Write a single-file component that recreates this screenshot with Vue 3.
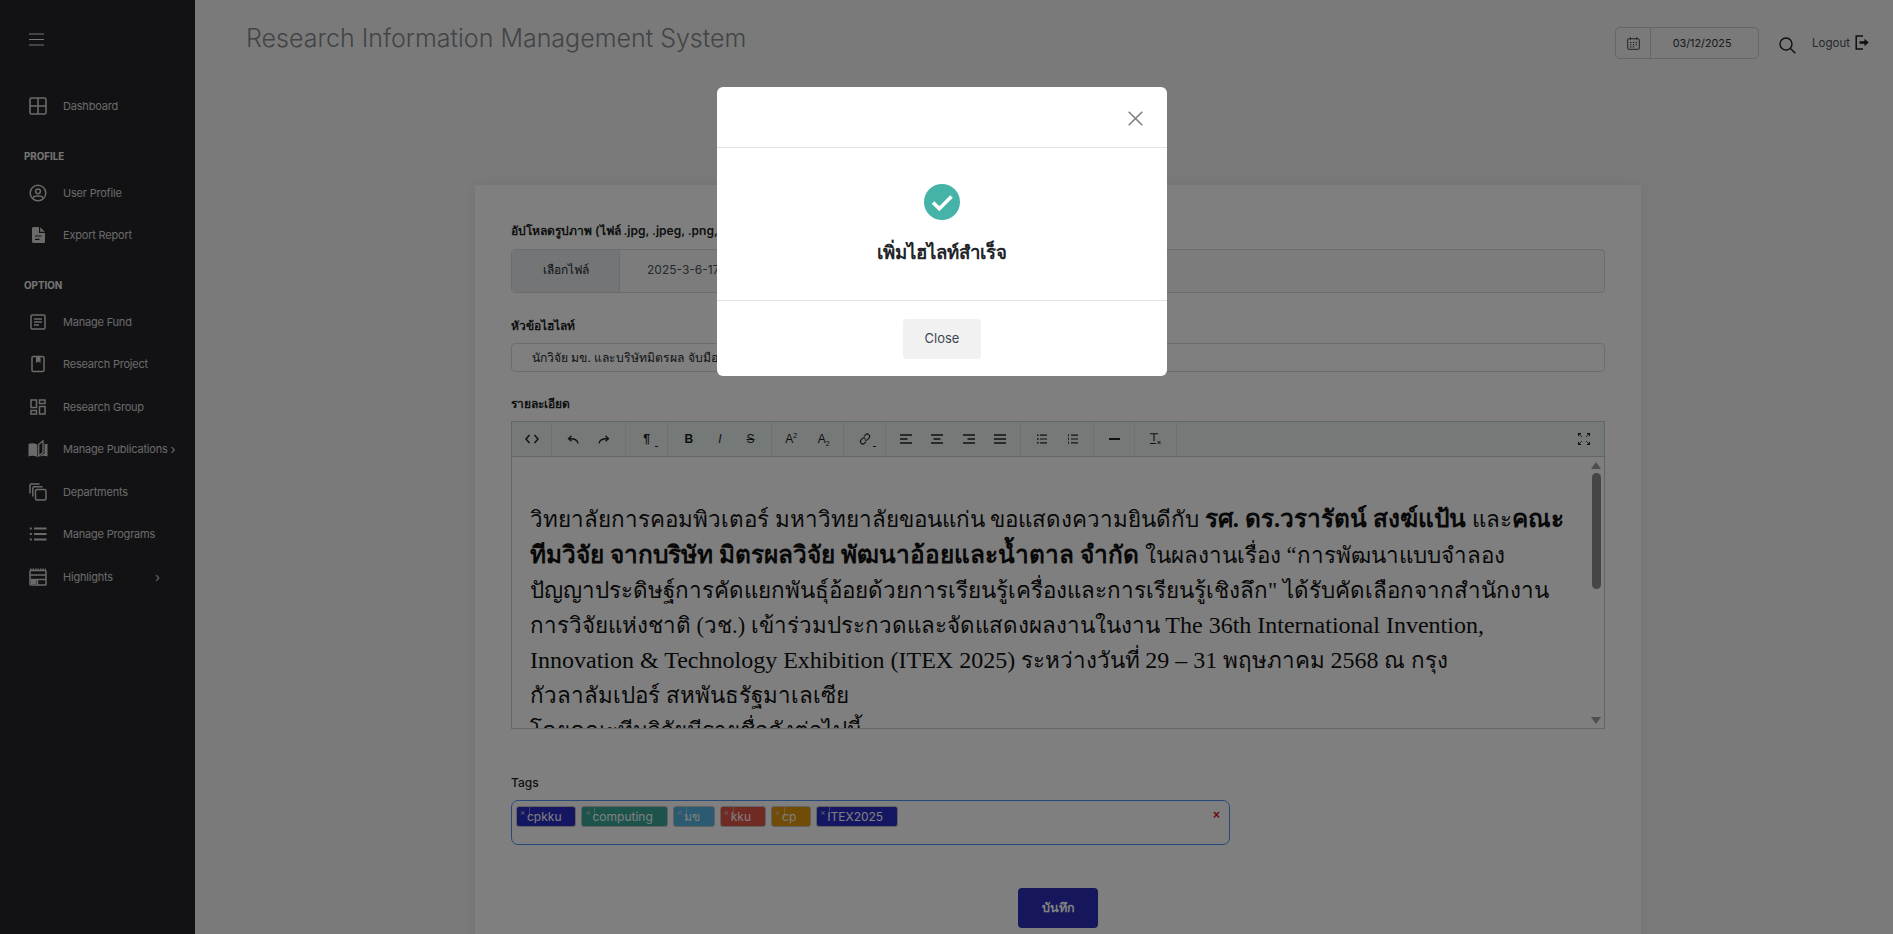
<template>
  <div class="page">
    <aside class="sidebar">
      <button class="burger">
        <svg width="15" height="13" viewBox="0 0 15 13"><path d="M0 1h15M0 6.5h15M0 12h15" stroke="currentColor" stroke-width="1.2" /></svg>
      </button>

      <a class="nav-item first">
        <span class="nav-icon"><svg viewBox="0 0 18 18"><rect x="1" y="1" width="16" height="16" rx="1.5" fill="none" stroke="currentColor" stroke-width="1.6" /><path d="M9 1v16M1 9h16" stroke="currentColor" stroke-width="1.6" /></svg></span>
        Dashboard
      </a>

      <div class="nav-head">PROFILE</div>
      <a class="nav-item">
        <span class="nav-icon"><svg viewBox="0 0 18 18"><circle cx="9" cy="9" r="7.8" fill="none" stroke="currentColor" stroke-width="1.5" /><circle cx="9" cy="7.3" r="2.4" fill="none" stroke="currentColor" stroke-width="1.5" /><path d="M4 14c1-2.6 9-2.6 10 0" fill="none" stroke="currentColor" stroke-width="1.5" /></svg></span>
        User Profile
      </a>
      <a class="nav-item">
        <span class="nav-icon"><svg viewBox="0 0 18 18"><path d="M3 2.5C3 1.6 3.6 1 4.5 1H11l5 5v10c0 .6-.6 1-1.2 1H4.5C3.6 17 3 16.4 3 15.5z" fill="currentColor" /><path d="M10.6 1v5.4H16M6 10h6.5M6 13.3h4.5" fill="none" stroke="#242429" stroke-width="1.2" /></svg></span>
        Export Report
      </a>

      <div class="nav-head">OPTION</div>
      <a class="nav-item">
        <span class="nav-icon"><svg viewBox="0 0 18 18"><rect x="2" y="2" width="14" height="14" rx="1.2" fill="none" stroke="currentColor" stroke-width="1.5" /><path d="M5 6h8M5 9h8M5 12h5" stroke="currentColor" stroke-width="1.4" /></svg></span>
        Manage Fund
      </a>
      <a class="nav-item">
        <span class="nav-icon"><svg viewBox="0 0 18 18"><rect x="3" y="1.5" width="12" height="15" rx="1.2" fill="none" stroke="currentColor" stroke-width="1.5" /><path d="M7 2h4.5v6L9.2 6.5 7 8z" fill="currentColor" /></svg></span>
        Research Project
      </a>
      <a class="nav-item">
        <span class="nav-icon"><svg viewBox="0 0 18 18" fill="none" stroke="currentColor" stroke-width="1.5"><rect x="2" y="2" width="5.5" height="7.5" /><rect x="10.5" y="2" width="5.5" height="3.5" /><rect x="2" y="12.5" width="5.5" height="3.5" /><rect x="10.5" y="8.5" width="5.5" height="7.5" /></svg></span>
        Research Group
      </a>
      <a class="nav-item">
        <span class="nav-icon"><svg class="wide" viewBox="0 0 20 18"><path d="M.5 4C3 3 6 3 9.3 4.5V17C6 15.5 3 15.5.5 16.5z" fill="currentColor" /><path d="M10.7 4.5 15 .8v11.7L10.7 16z" fill="none" stroke="currentColor" stroke-width="1.3" /><path d="M16.5 4h3v12.5c-3-1-6-1-8.5.5 2-2 4-3 5.5-3.5z" fill="currentColor" /></svg></span>
        Manage Publications
        <span class="chev near">›</span>
      </a>
      <a class="nav-item">
        <span class="nav-icon"><svg viewBox="0 0 18 18" fill="none" stroke="currentColor" stroke-width="1.5"><rect x="6.5" y="6.5" width="10.5" height="10.5" rx="1.5" /><path d="M3.8 13.5V5.2c0-.8.6-1.4 1.4-1.4h8.3M1 10.5V2.2C1 1.5 1.5 1 2.2 1h8.3" /></svg></span>
        Departments
      </a>
      <a class="nav-item">
        <span class="nav-icon"><svg viewBox="0 0 18 18"><path d="M5 3.5h12.5M5 9h12.5M5 14.5h12.5" stroke="currentColor" stroke-width="1.8" /><path d="M.8 3.5h2M.8 9h2M.8 14.5h2" stroke="currentColor" stroke-width="2.2" /></svg></span>
        Manage Programs
      </a>
      <a class="nav-item">
        <span class="nav-icon"><svg viewBox="0 0 18 18" fill="none" stroke="currentColor" stroke-width="1.5"><rect x="1" y="2.5" width="16" height="14.5" rx=".8" /><path d="M1 1.3h16" stroke-dasharray="1.5 1" /><path d="M1 7h16M1 11.5h16M8.5 11.5V17" /><rect x="2" y="12" width="5.5" height="4" fill="currentColor" stroke="none" /></svg></span>
        Highlights
        <span class="chev">›</span>
      </a>
    </aside>

    <main class="main">
      <header class="topbar">
        <h1 class="app-title">Research Information Management System</h1>
        <div class="top-tools">
          <div class="date-box">
            <span class="date-icon">
              <svg width="13" height="13" viewBox="0 0 13 13" fill="none" stroke="#2c3238" stroke-width=".9"><rect x=".7" y="1.8" width="11.6" height="10.5" rx=".8" /><path d="M3.3 .3v2.3M9.7 .3v2.3" /><path d="M3 5.5h1.4M5.8 5.5h1.4M8.6 5.5h1.4M3 7.8h1.4M5.8 7.8h1.4M8.6 7.8h1.4M3 10h1.4M5.8 10h1.4" stroke-width="1" /></svg>
            </span>
            <span class="date-value">03/12/2025</span>
          </div>
          <svg class="search-icon" width="17" height="17" viewBox="0 0 17 17" fill="none" stroke="#1d1f23" stroke-width="1.4"><circle cx="7" cy="7" r="6" /><path d="m11.5 11.5 4.8 4.8" /></svg>
          <a class="logout">
            Logout
            <svg width="14" height="15" viewBox="0 0 14 15" fill="none"><path d="M8 1H1.2v13H8" stroke="#1b1d21" stroke-width="1.5" /><path d="M4.5 6.3h5V3.8l4.2 3.7-4.2 3.7V8.7h-5z" fill="#1b1d21" /></svg>
          </a>
        </div>
      </header>

      <section class="card">
        <label class="field-label">อัปโหลดรูปภาพ (ไฟล์ .jpg, .jpeg, .png, .gif)</label>
        <div class="file-input">
          <span class="file-btn">เลือกไฟล์</span>
          <span class="file-name">2025-3-6-17-45-12.jpg</span>
        </div>

        <label class="field-label title-label">หัวข้อไฮไลท์</label>
        <div class="text-input">นักวิจัย มข. และบริษัทมิตรผล จับมือนวัตกรรมอ้อยไทย คว้ารางวัลนานาชาติ ITEX 2025</div>

        <label class="field-label detail-label">รายละเอียด</label>
        <div class="editor">
          <div class="toolbar">
            <div class="tool-group code">
              <svg width="14" height="10" viewBox="0 0 14 10" fill="none" stroke="#1f2326" stroke-width="1.5"><path d="M4.5 1 1 5l3.5 4M9.5 1 13 5 9.5 9" /></svg>
            </div>
            <div class="tool-group history">
              <svg width="12" height="9" viewBox="0 0 12 9" fill="none" stroke="#1f2326" stroke-width="1.3"><path d="M11 8.5C10.5 5 8 3.5 2 3.8" /><path d="M4.5 .8 1.5 3.8l3 2.5" /></svg>
              <svg width="12" height="9" viewBox="0 0 12 9" fill="none" stroke="#1f2326" stroke-width="1.3"><path d="M1 8.5C1.5 5 4 3.5 10 3.8" /><path d="m7.5 .8 3 3-3 2.5" /></svg>
            </div>
            <div class="tool-group para">
              <span class="tool-text bold">¶</span><span class="caret"></span>
            </div>
            <div class="tool-group style">
              <span class="tool-text bold">B</span>
              <span class="tool-text italic">I</span>
              <span class="tool-text strike">S</span>
            </div>
            <div class="tool-group script">
              <span class="tool-text">A<sup>2</sup></span>
              <span class="tool-text">A<sub>2</sub></span>
            </div>
            <div class="tool-group link">
              <svg width="12" height="12" viewBox="0 0 12 12" fill="none" stroke="#1f2326" stroke-width="1.1"><path d="m5 3.3 1.7-1.7a2 2 0 0 1 3 0l.3.3a2 2 0 0 1 0 3L8.7 6.5a2 2 0 0 1-3 0" /><path d="M7 8.700 5.300 10.400a2 2 0 0 1-3 0L2 10a2 2 0 0 1 0-3l1.300-1.500a2 2 0 0 1 3 0" /></svg>
              <span class="caret"></span>
            </div>
            <div class="tool-group align">
              <svg v-for="a in alignIcons" :key="a" width="12" height="10" viewBox="0 0 12 10" stroke="#1f2326" stroke-width="1.3"><path :d="a" /></svg>
            </div>
            <div class="tool-group lists">
              <svg width="10" height="10" viewBox="0 0 10 10"><path d="M3 1.2h7M3 5h7M3 8.8h7" stroke="#1f2326" stroke-width="1.2" /><path d="M0 1.2h1.6M0 5h1.6M0 8.8h1.6" stroke="#1f2326" stroke-width="1.5" /></svg>
              <svg width="10" height="10" viewBox="0 0 10 10"><path d="M3 1.2h7M3 5h7M3 8.8h7" stroke="#1f2326" stroke-width="1.2" /><path d="M.5 0v2.5M.5 3.7v2.5M.5 7.5V10" stroke="#1f2326" stroke-width=".8" /></svg>
            </div>
            <div class="tool-group rule">
              <span class="rule-line"></span>
            </div>
            <div class="tool-group clear">
              <svg width="11" height="12" viewBox="0 0 11 12" fill="none" stroke="#1f2326"><path d="M0 .7h8M4 .7v7.5M0 10.5h6" stroke-width="1.1" /><path d="m7.5 8 3 3m0-3-3 3" stroke-width="1" /></svg>
            </div>
            <div class="tool-spacer"></div>
            <svg class="expand" width="12" height="12" viewBox="0 0 12 12"><path d="M0 0h3.5L0 3.5zM12 0v3.5L8.5 0zM0 12V8.5L3.5 12zM12 12H8.5L12 8.5z" fill="#1f2326" /><path d="m1 1 3 3M11 1 8 4M1 11l3-3M11 11 8 8" stroke="#1f2326" stroke-width=".8" /></svg>
          </div>
          <div class="editor-body">
            <div class="content">
              <p class="spacer-line">&nbsp;</p>
              <p>วิทยาลัยการคอมพิวเตอร์ มหาวิทยาลัยขอนแก่น ขอแสดงความยินดีกับ <b>รศ. ดร.วรารัตน์ สงฆ์แป้น</b> และ<b>คณะ<br />ทีมวิจัย จากบริษัท มิตรผลวิจัย พัฒนาอ้อยและน้ำตาล จำกัด</b> ในผลงานเรื่อง “การพัฒนาแบบจำลอง<br />ปัญญาประดิษฐ์การคัดแยกพันธุ์อ้อยด้วยการเรียนรู้เครื่องและการเรียนรู้เชิงลึก" ได้รับคัดเลือกจากสำนักงาน<br />การวิจัยแห่งชาติ (วช.) เข้าร่วมประกวดและจัดแสดงผลงานในงาน <span class="en">The 36th International Invention,<br />Innovation &amp; Technology Exhibition (ITEX 2025)</span> ระหว่างวันที่ <span class="en">29 – 31</span> พฤษภาคม <span class="en">2568</span> ณ กรุง<br />กัวลาลัมเปอร์ สหพันธรัฐมาเลเซีย</p>
              <p>โดยคณะทีมวิจัยมีรายชื่อดังต่อไปนี้</p>
            </div>
            <div class="scrollbar">
              <span class="arrow up"></span>
              <span class="thumb"></span>
              <span class="arrow down"></span>
            </div>
          </div>
        </div>

        <label class="field-label tags-label">Tags</label>
        <div class="tags-box">
          <span v-for="tag in tags" :key="tag.name" class="tag" :style="{ background: tag.color }">
            <span class="tag-x">×</span>
            <span class="tag-name">{{ tag.name }}</span>
          </span>
          <span class="tags-clear">×</span>
        </div>

        <div class="actions">
          <button class="save-btn">บันทึก</button>
        </div>
      </section>
    </main>

    <div class="backdrop"></div>

    <div class="modal">
      <div class="modal-head">
        <svg width="15" height="15" viewBox="0 0 15 15" stroke="#7c7c7c" stroke-width="1.5"><path d="m.7.7 13.6 13.6M14.3.7.7 14.3" /></svg>
      </div>
      <div class="modal-body">
        <svg width="36" height="36" viewBox="0 0 36 36"><circle cx="18" cy="18" r="18" fill="#45b3a8" /><path d="m9 18.5 6.3 6.2L27.5 12.5" fill="none" stroke="#fff" stroke-width="3.6" /></svg>
        <h2 class="modal-title">เพิ่มไฮไลท์สำเร็จ</h2>
      </div>
      <div class="modal-foot">
        <button class="close-btn">Close</button>
      </div>
    </div>
  </div>
</template>

<script setup>
const tags = [
  { name: 'cpkku', color: '#2a2cc4' },
  { name: 'computing', color: '#38a898' },
  { name: 'มข', color: '#58b4e0' },
  { name: 'kku', color: '#e05448' },
  { name: 'cp', color: '#e2980e' },
  { name: 'ITEX2025', color: '#2a2cc4' }
]

const alignIcons = [
  'M0 1h12M0 5h7.5M0 9h12',
  'M0 1h12M2.5 5h7M0 9h12',
  'M0 1h12M4.5 5H12M0 9h12',
  'M0 1h12M0 5h12M0 9h12'
]
</script>

<style>
html,
body {
  margin: 0;
  overflow: hidden;
}
</style>

<style scoped>
.page {
  display: flex;
  position: relative;
  height: 934px;
  overflow: hidden;
  background: #f5f5f5;
  font-family: Inter, "Noto Sans", sans-serif;
  color: #3a3a3a;
}

.sidebar {
  flex: 0 0 195px;
  background: #242429;
  color: #d4d4d4;
  padding: 33px 0 0 29px;
  box-sizing: border-box;
  font-size: 11px;
  letter-spacing: -0.2px;
}
.burger {
  display: block;
  padding: 0;
  border: 0;
  background: none;
  color: #ededed;
  height: 13px;
  line-height: 0;
}

.nav-item {
  display: flex;
  align-items: center;
  height: 42.5px;
  white-space: nowrap;
}
.nav-item.first {
  margin-top: 39px;
}
.nav-icon {
  flex: 0 0 34px;
  display: flex;
  line-height: 0;
}
.nav-icon svg {
  width: 18px;
  height: 18px;
}
.nav-icon svg.wide {
  width: 20px;
  margin-left: -1px;
}
.nav-head {
  margin: 19px 0 0 -5px;
  height: 25px;
  font-size: 9.8px;
  line-height: 20px;
  font-weight: 700;
  letter-spacing: 0;
  color: #ececec;
}
.chev {
  margin-left: 42px;
  font-size: 13px;
}
.chev.near {
  margin-left: 3px;
}

.main {
  flex: 1;
  min-width: 0;
  padding: 0 24px 0 51px;
  box-sizing: border-box;
}
.topbar {
  display: flex;
  justify-content: space-between;
  height: 185px;
}
.app-title {
  margin: 21px 0 0;
  font-size: 25px;
  line-height: 34px;
  font-weight: 300;
  color: #84888c;
}
.top-tools {
  display: flex;
  align-items: flex-start;
  padding-top: 27px;
}
.date-box {
  display: flex;
  align-items: center;
  width: 144px;
  height: 32px;
  border: 1px solid #c8ccd0;
  border-radius: 5px;
  box-sizing: border-box;
}
.date-icon {
  display: flex;
  justify-content: center;
  align-items: center;
  flex: 0 0 34px;
  height: 30px;
  border-right: 1px solid #c8ccd0;
}
.date-value {
  flex: 1;
  text-align: center;
  font-size: 10.8px;
  color: #2e3136;
  padding: 1px 5px 0 0;
}
.search-icon {
  margin: 10px 0 0 20px;
}
.logout {
  display: flex;
  align-items: center;
  gap: 5px;
  margin: 8px 0 0 16px;
  font-size: 11.5px;
  color: #4a4f55;
}

.card {
  width: 1166px;
  margin-left: 229px;
  padding: 38px 36px 40px;
  box-sizing: border-box;
  background: #fff;
  box-shadow: 0 0 14px rgba(0, 0, 0, 0.08);
  font-family: "Liberation Serif", "Noto Sans", serif;
}
.field-label {
  display: block;
  height: 16px;
  font-family: Inter, "Noto Sans", sans-serif;
  font-size: 12px;
  line-height: 16px;
  font-weight: 600;
  color: #1c1f24;
}
.file-input {
  display: flex;
  margin-top: 10px;
  height: 44px;
  width: 1094px;
  border: 1px solid #d6dadd;
  border-radius: 4px;
  box-sizing: border-box;
  background: #f8f8f8;
  font-family: Inter, "Noto Sans", sans-serif;
  font-size: 12px;
}
.file-btn {
  flex: 0 0 107px;
  background: #e6eaee;
  border-right: 1px solid #d6dadd;
  text-align: center;
  line-height: 40px;
  color: #24272c;
}
.file-name {
  padding-left: 27px;
  line-height: 40px;
  color: #4c5157;
}
.title-label {
  margin-top: 25px;
}
.text-input {
  margin-top: 9px;
  width: 1094px;
  height: 29px;
  padding-left: 20px;
  border: 1px solid #d6dadd;
  border-radius: 4px;
  box-sizing: border-box;
  background: #fff;
  font-family: Inter, "Noto Sans", sans-serif;
  font-size: 12.2px;
  line-height: 27px;
  color: #24272c;
  white-space: nowrap;
  overflow: hidden;
}
.detail-label {
  margin-top: 24px;
}

.editor {
  margin-top: 9px;
  width: 1094px;
  height: 308px;
  border: 1px solid #c6cacd;
  box-sizing: border-box;
  display: flex;
  flex-direction: column;
}
.toolbar {
  display: flex;
  align-items: center;
  flex: 0 0 35px;
  background: #eaf2ee;
  border-bottom: 1px solid #c6cacd;
  box-sizing: border-box;
  font-family: "Liberation Sans", sans-serif;
  font-size: 12px;
  color: #1f2326;
}
.tool-group {
  display: flex;
  align-items: center;
  justify-content: space-around;
  position: relative;
  height: 33px;
  box-sizing: border-box;
  border-right: 1px solid #dde3e0;
}
.tool-group.code { width: 40px; }
.tool-group.history { width: 74px; padding: 0 5.5px; }
.tool-group.para { width: 42px; }
.tool-group.style { width: 104px; padding: 0 4px; }
.tool-group.script { width: 72px; padding: 0 3px; }
.tool-group.link { width: 42px; }
.tool-group.align { width: 135px; padding: 0 4.5px; }
.tool-group.lists { width: 73px; padding: 0 5px; }
.tool-group.rule { width: 41px; }
.tool-group.clear { width: 42px; }
.tool-text {
  line-height: 1;
}
.tool-text sup,
.tool-text sub {
  font-size: 7px;
  line-height: 0;
}
.bold { font-weight: 700; }
.italic { font-style: italic; }
.strike { text-decoration: line-through; }
.caret {
  position: absolute;
  right: 9px;
  bottom: 9px;
  width: 3px;
  height: 1px;
  background: #1f2326;
}
.rule-line {
  width: 11px;
  height: 1.5px;
  background: #1f2326;
}
.tool-spacer {
  flex: 1;
}
.expand {
  margin-right: 14px;
}

.editor-body {
  flex: 1;
  min-height: 0;
  display: flex;
  overflow: hidden;
}
.content {
  flex: 1;
  min-width: 0;
  overflow: hidden;
  padding: 8px 0 0 18px;
  font-size: 22.4px;
  line-height: 35px;
  white-space: nowrap;
  color: #111;
}
.content p {
  margin: 0;
}
.content b {
  font-size: 24.4px;
}
.content .en {
  font-size: 24px;
}
.content .spacer-line {
  height: 36px;
}
.scrollbar {
  flex: 0 0 14px;
  margin-right: 1px;
  display: flex;
  flex-direction: column;
  align-items: center;
  padding-top: 5px;
  box-sizing: border-box;
  height: 271px;
}
.thumb {
  width: 9px;
  height: 116px;
  margin: 4px 0 auto;
  border-radius: 5px;
  background: #8a8a8a;
}
.arrow {
  width: 0;
  height: 0;
  border-left: 5.5px solid transparent;
  border-right: 5.5px solid transparent;
}
.arrow.up {
  border-bottom: 7px solid #9c9c9c;
}
.arrow.down {
  border-top: 7px solid #9c9c9c;
  margin-bottom: 4px;
}

.tags-label {
  margin-top: 46px;
  font-size: 12px;
  font-weight: 500;
}
.tags-box {
  display: flex;
  align-items: flex-start;
  gap: 5px;
  position: relative;
  margin-top: 9px;
  width: 719px;
  height: 45px;
  padding: 5px 4px;
  border: 1px solid #4e92ee;
  border-radius: 7px;
  box-sizing: border-box;
}
.tag {
  display: flex;
  height: 21px;
  border: 1px solid #c5c5c5;
  border-radius: 3px;
  box-sizing: border-box;
  font-family: Inter, "Noto Sans", sans-serif;
  font-size: 12px;
  line-height: 19px;
  color: #fff;
}
.tag-x {
  flex: 0 0 13px;
  box-sizing: border-box;
  font-size: 8px;
  line-height: 11px;
  padding-left: 3px;
  color: #cfcfcf;
  border-right: 1px solid rgba(255, 255, 255, 0.4);
  height: 10px;
}
.tag-name {
  margin-left: -3px;
  padding-right: 14px;
}
.tags-clear {
  position: absolute;
  right: 9px;
  top: 8px;
  font-family: "Liberation Sans", sans-serif;
  font-size: 12px;
  font-weight: 700;
  line-height: 12px;
  color: #e01020;
}

.actions {
  display: flex;
  justify-content: center;
  width: 1094px;
  margin-top: 43px;
}
.save-btn {
  width: 80px;
  height: 40px;
  border: 0;
  border-radius: 4px;
  background: #2a2cb8;
  color: #fff;
  font-family: Inter, "Noto Sans", sans-serif;
  font-size: 12.5px;
  font-weight: 600;
}

.backdrop {
  position: absolute;
  inset: 0;
  background: rgba(0, 0, 0, 0.5);
}
.modal {
  position: absolute;
  left: 717px;
  top: 87px;
  width: 450px;
  height: 289px;
  background: #fff;
  border-radius: 6px;
  display: flex;
  flex-direction: column;
  overflow: hidden;
}
.modal-head {
  display: flex;
  justify-content: flex-end;
  align-items: center;
  flex: 0 0 61px;
  padding: 2px 24px 0 0;
  box-sizing: border-box;
  border-bottom: 1px solid #dee2e6;
}
.modal-body {
  flex: 0 0 152px;
  box-sizing: border-box;
  padding-top: 36px;
  display: flex;
  flex-direction: column;
  align-items: center;
}
.modal-title {
  margin: 20px 0 0;
  font-family: "Noto Sans", sans-serif;
  font-size: 18.6px;
  line-height: 24px;
  font-weight: 700;
  color: #212529;
}
.modal-foot {
  flex: 1;
  display: flex;
  justify-content: center;
  padding-top: 18px;
  box-sizing: border-box;
  border-top: 1px solid #dee2e6;
}
.close-btn {
  width: 78px;
  height: 40px;
  padding-bottom: 4px;
  border: 0;
  border-radius: 4px;
  background: #f1f1f1;
  color: #3c4652;
  font-family: Inter, "Noto Sans", sans-serif;
  font-size: 13px;
}
</style>
